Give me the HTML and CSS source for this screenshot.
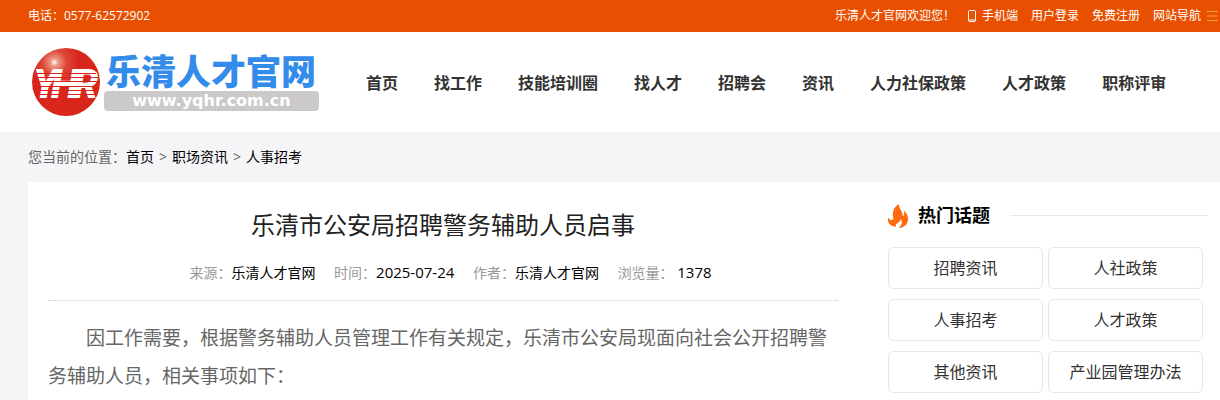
FILE: index.html
```
<!DOCTYPE html>
<html lang="zh-CN">
<head>
  <meta charset="UTF-8">
  <title>乐清市公安局招聘警务辅助人员启事</title>
  <link rel="stylesheet" href="styles.css">
</head>
<body>
  <div class="top-bar">
    <span>电话：0577-62572902</span>
    <div class="top-links">
      <span class="welcome">乐清人才官网欢迎您！</span>
      <a href="#" class="mobile">
        <svg width="8" height="12" viewBox="0 0 8 12"><path d="M1.5.5h5a1 1 0 0 1 1 1v9a1 1 0 0 1-1 1h-5a1 1 0 0 1-1-1v-9a1 1 0 0 1 1-1zM.5 10h7" fill="none" stroke="#fff"/></svg>
        手机端
      </a>
      <a href="#">用户登录</a>
      <a href="#">免费注册</a>
      <a href="#" class="site-nav">
        网站导航
        <svg width="11" height="10" viewBox="0 0 11 10"><path d="M0 .5h11M0 5h11M0 9.5h11" stroke="#f5a623"/></svg>
      </a>
    </div>
  </div>

  <header class="header">
    <a href="#" class="logo">
      <svg class="logo-ball" width="70" height="70" viewBox="0 0 70 70">
        <defs>
          <radialGradient id="ball" cx="0.33" cy="0.21" r="0.36">
            <stop offset="0" stop-color="#fff"/>
            <stop offset="0.16" stop-color="#ee9482"/>
            <stop offset="0.5" stop-color="#de4636"/>
            <stop offset="1" stop-color="#d8261c"/>
          </radialGradient>
        </defs>
        <circle cx="35" cy="35" r="34" fill="url(#ball)"/>
        <text class="logo-mark" x="2 20 42" y="51">YHR</text>
        <path d="M5 26.500h60M3 30.500h64M3 34.500h64M3 39.500h64M5 43.500h60M6 47.500h58" stroke="#d8261c"/>
      </svg>
      <span class="logo-text">
        <span class="logo-name">乐清人才官网</span>
        <span class="logo-url">www.yqhr.com.cn</span>
      </span>
    </a>
    <nav class="main-nav">
      <a href="#">首页</a>
      <a href="#">找工作</a>
      <a href="#">技能培训圈</a>
      <a href="#">找人才</a>
      <a href="#">招聘会</a>
      <a href="#">资讯</a>
      <a href="#">人力社保政策</a>
      <a href="#">人才政策</a>
      <a href="#">职称评审</a>
    </nav>
  </header>

  <div class="breadcrumb">
    <span>您当前的位置：<a href="#">首页</a></span>
    <span>&gt;</span>
    <a href="#">职场资讯</a>
    <span>&gt;</span>
    <a href="#">人事招考</a>
  </div>

  <div class="content">
    <main class="article">
      <h1>乐清市公安局招聘警务辅助人员启事</h1>
      <div class="meta">
        <span>来源：<em>乐清人才官网</em></span>
        <span>时间：<em class="num">2025-07-24</em></span>
        <span>作者：<em>乐清人才官网</em></span>
        <span>浏览量： <em class="num">1378</em></span>
      </div>
      <p>因工作需要，根据警务辅助人员管理工作有关规定，乐清市公安局现面向社会公开招聘警务辅助人员，相关事项如下：</p>
    </main>

    <aside class="sidebar">
      <h2>
        <svg width="20" height="24" viewBox="0 0 20 24"><path d="M10.800 0C10.500 4 14.500 7 14.500 10.500c0 1 .2 1.500.6 1.500 1.300-1 1.400-3.500 1-5.500C18.500 8.500 20 11.500 20 15c0 5-3.500 8.600-9.500 9 3-2 4.300-5 2.600-9-.8 2.300-2.500 3.300-4.100 4.600-1.300 1-1.500 2-1 3.100C3.500 22.500 0 20 0 16c0-1 .1-1.800.5-2.600.8 1.800 2 2.600 3.200 2.600 1.600 0 2-1.300 1.500-3C4 8 6 3 10.800 0z" fill="#ff6a0d"/></svg>
        热门话题
      </h2>
      <div class="topics">
        <a href="#">招聘资讯</a>
        <a href="#">人社政策</a>
        <a href="#">人事招考</a>
        <a href="#">人才政策</a>
        <a href="#">其他资讯</a>
        <a href="#">产业园管理办法</a>
      </div>
    </aside>
  </div>
</body>
</html>
```
FILE: styles.css
```
* {
  box-sizing: border-box;
}

body {
  margin: 0;
  font-family: "Open Sans", "Noto Sans CJK SC", sans-serif;
  font-size: 14px;
  color: #666;
  background: #f5f5f8;
}

a {
  color: #000;
  text-decoration: none;
}

.top-bar {
  display: flex;
  justify-content: space-between;
  height: 32px;
  padding: 0 2px 0 28px;
  line-height: 32px;
  font-size: 12px;
  color: #fff;
  background: #e94f00;
}

.top-bar a {
  color: #fff;
}

.top-links {
  display: flex;
  gap: 13px;
}

.mobile,
.site-nav {
  display: flex;
  align-items: center;
  gap: 6px;
}

.header {
  display: flex;
  align-items: center;
  height: 100px;
  padding-left: 31px;
  background: #fff;
}

.logo {
  display: flex;
  align-items: center;
  gap: 3px;
  margin-right: 47px;
}

.logo-mark {
  font: italic 900 40px Roboto, sans-serif;
  fill: #fff;
}

.logo-text {
  display: flex;
  flex-direction: column;
  width: 215px;
}

.logo-name {
  padding-left: 2px;
  font-size: 35px;
  font-weight: 900;
  line-height: 38px;
  color: #338bea;
  white-space: nowrap;
}

.logo-url {
  border-radius: 4px;
  font: bold 16px/20px "DejaVu Sans", sans-serif;
  text-align: center;
  color: #fff;
  background: #cbc9ca;
}

.main-nav {
  display: flex;
  gap: 36px;
  font-size: 16px;
  font-weight: bold;
  white-space: nowrap;
}

.main-nav a {
  color: #333;
}

.breadcrumb {
  display: flex;
  gap: 5px;
  padding-left: 28px;
  line-height: 50px;
}

.content {
  display: flex;
  gap: 50px;
  margin-left: 28px;
  padding: 20px 12px 6px 20px;
  background: #fff;
}

.article {
  flex: 1;
}

.article h1 {
  margin: 0;
  font-size: 24px;
  font-weight: normal;
  line-height: 46px;
  text-align: center;
  color: #222;
}

.meta {
  padding: 10px 0 12px;
  border-bottom: 1px dotted #ccc;
  line-height: 30px;
  text-align: center;
  color: #999;
}

.meta span {
  margin-left: 15px;
}

.meta em {
  font-style: normal;
  color: #000;
}

.meta .num {
  font-size: 15px;
  line-height: 1;
}

.article p {
  margin: 18px 0 0;
  font-size: 19px;
  line-height: 38px;
  text-indent: 2em;
}

.sidebar {
  width: 320px;
}

.sidebar h2 {
  display: flex;
  align-items: center;
  gap: 10px;
  margin: 0 0 18px;
  font-size: 18px;
  line-height: 27px;
  color: #000;
}

.sidebar h2::after {
  content: "";
  flex: 1;
  margin-left: 10px;
  border-top: 1px solid #e8e8e8;
}

.topics {
  display: grid;
  grid-template-columns: 1fr 1fr;
  gap: 10px 5px;
  padding-right: 5px;
}

.topics a {
  border: 1px solid #e8e8e8;
  border-radius: 5px;
  font-size: 16px;
  line-height: 40px;
  text-align: center;
  color: #333;
}
```
